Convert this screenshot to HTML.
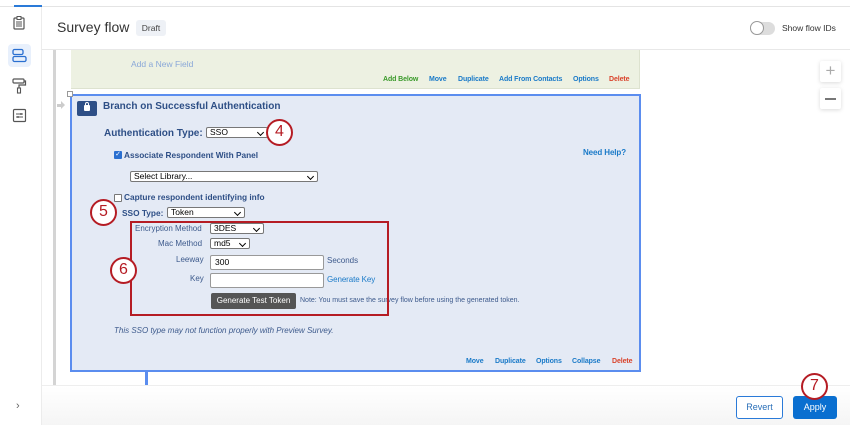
<!DOCTYPE html>
<html><head><meta charset="utf-8"><style>
*{box-sizing:border-box;margin:0;padding:0}
body{width:850px;height:425px;position:relative;overflow:hidden;background:#fff;font-family:"Liberation Sans",Arial,sans-serif;}
.a{position:absolute}
.lnk{color:#1a7ac8;font-size:7px;font-weight:bold;letter-spacing:-0.1px}
.lbl{color:#3d5a8c;font-size:8px}
.sel{position:absolute;background:#fff;border:1px solid #777;border-radius:2px;font-size:8.5px;color:#000;padding-left:3px;line-height:9px;height:11px}
.sel:after{content:"";position:absolute;right:4px;top:2px;width:4px;height:4px;border-right:1.5px solid #000;border-bottom:1.5px solid #000;transform:rotate(45deg)}
.inp{position:absolute;background:#fff;border:1px solid #999;border-radius:2px;font-size:8.5px;padding-left:4px;line-height:13px;height:15px}
.circ{position:absolute;width:27px;height:27px;border-radius:50%;border:2.5px solid #b51c24;background:#fff;color:#b51c24;font-size:16px;text-align:center;line-height:22px}
</style></head><body>
<div class="a" style="left:0;top:6px;width:850px;height:1px;background:#e4e4e4"></div>
<div class="a" style="left:14px;top:5px;width:28px;height:2px;background:#2a7ad8"></div>
<div class="a" style="left:41px;top:7px;width:1px;height:418px;background:#ececec"></div>
<svg class="a" style="left:11px;top:15px" width="16" height="16" viewBox="0 0 16 16"><rect x="3" y="3" width="10" height="11" rx="1" fill="none" stroke="#555" stroke-width="1.2"/><rect x="6" y="1.5" width="4" height="3" fill="#fff" stroke="#555"/><path d="M5 7h6M5 9h6M5 11h6" stroke="#555"/></svg>
<div class="a" style="left:8px;top:44px;width:23px;height:23px;border-radius:4px;background:#e8f0fc"></div>
<svg class="a" style="left:12px;top:48px" width="15" height="15" viewBox="0 0 15 15"><rect x="1" y="1.5" width="10" height="5" rx="1.5" fill="none" stroke="#2a6fd0" stroke-width="1.3"/><rect x="1" y="8.5" width="13" height="5" rx="1.5" fill="none" stroke="#2a6fd0" stroke-width="1.3"/></svg>
<svg class="a" style="left:12px;top:78px" width="15" height="16" viewBox="0 0 15 16"><rect x="1" y="1" width="11" height="4" rx="1" fill="none" stroke="#555" stroke-width="1.2"/><path d="M12 3h1.5v4H7v3" fill="none" stroke="#555" stroke-width="1.2"/><rect x="5.5" y="10" width="3" height="5" fill="none" stroke="#555" stroke-width="1.1"/></svg>
<svg class="a" style="left:12px;top:108px" width="15" height="15" viewBox="0 0 15 15"><rect x="1.5" y="1.5" width="12" height="12" rx="1" fill="none" stroke="#555" stroke-width="1.2"/><path d="M4 6h7M4 9h7" stroke="#555"/><circle cx="9" cy="6" r="1" fill="#555"/><circle cx="6" cy="9" r="1" fill="#555"/></svg>
<div class="a" style="left:16px;top:400px;color:#666;font-size:11px">›</div>
<div class="a" style="left:57px;top:19px;font-size:14px;color:#333">Survey flow</div>
<div class="a" style="left:136px;top:20px;width:30px;height:16px;background:#eef1f6;border-radius:3px;font-size:8.5px;color:#444;text-align:center;line-height:16px">Draft</div>
<div class="a" style="left:750px;top:22px;width:25px;height:13px;border-radius:7px;background:#ddd"></div>
<div class="a" style="left:750px;top:21px;width:14px;height:14px;border-radius:50%;background:#fff;border:1px solid #999"></div>
<div class="a" style="left:782px;top:23px;font-size:8.5px;color:#333">Show flow IDs</div>
<div class="a" style="left:42px;top:49px;width:808px;height:1px;background:#e8e8e8"></div>
<div class="a" style="left:820px;top:61px;width:21px;height:21px;background:#fff;box-shadow:0 1px 4px rgba(0,0,0,.15);border-radius:2px;color:#aaa;font-size:17px;text-align:center;line-height:20px">+</div>
<div class="a" style="left:820px;top:88px;width:21px;height:21px;background:#fff;box-shadow:0 1px 4px rgba(0,0,0,.15);border-radius:2px;"><div class="a" style="left:5px;top:10px;width:11px;height:1.5px;background:#777"></div></div>
<div class="a" style="left:53px;top:50px;width:3px;height:335px;background:#d4d4d4"></div>
<div class="a" style="left:71px;top:50px;width:569px;height:39px;background:#edf1e2;border-bottom:1px solid #dde2cf;border-right:1px solid #dde2cf"></div>
<div class="a" style="left:131px;top:59px;font-size:8.5px;color:#8aa8d8">Add a New Field</div>
<div class="a lnk" style="left:383px;top:76px;color:#3a9a2a">Add Below</div>
<div class="a lnk" style="left:429px;top:76px">Move</div>
<div class="a lnk" style="left:458px;top:76px">Duplicate</div>
<div class="a lnk" style="left:499px;top:76px">Add From Contacts</div>
<div class="a lnk" style="left:573px;top:76px">Options</div>
<div class="a lnk" style="left:609px;top:76px;color:#d9432b">Delete</div>
<div class="a" style="left:57px;top:104px;width:6px;height:3px;background:#ccc"></div>
<div class="a" style="left:61px;top:101px;width:0;height:0;border-left:4px solid #ccc;border-top:4px solid transparent;border-bottom:4px solid transparent"></div>
<div class="a" style="left:70px;top:94px;width:571px;height:278px;background:#e4eaf5;border:2px solid #5b8def"></div>
<div class="a" style="left:67px;top:91px;width:6px;height:6px;background:#fff;border:1px solid #999"></div>
<div class="a" style="left:77px;top:101px;width:20px;height:15px;background:#2e4f86;border-radius:2px"></div>
<div class="a" style="left:84px;top:105px;width:6px;height:6px;background:#fff;border-radius:1px"></div>
<div class="a" style="left:85px;top:102px;width:4px;height:5px;border:1.3px solid #fff;border-radius:2px 2px 0 0"></div>
<div class="a" style="left:103px;top:101px;font-size:10px;font-weight:bold;color:#2e4f86">Branch on Successful Authentication</div>
<div class="a" style="left:104px;top:128px;font-size:10px;font-weight:bold;color:#2e4f86">Authentication Type:</div>
<div class="sel" style="left:206px;top:127px;width:62px">SSO</div>
<div class="a" style="left:114px;top:151px;width:8px;height:8px;background:#2a6fd0;border-radius:1px;color:#fff;font-size:7px;line-height:8px;text-align:center">✓</div>
<div class="a" style="left:124px;top:150px;font-size:8.3px;font-weight:bold;color:#2e4f86">Associate Respondent With Panel</div>
<div class="a lnk" style="left:583px;top:148px;font-size:8px">Need Help?</div>
<div class="sel" style="left:130px;top:171px;width:188px">Select Library...</div>
<div class="a" style="left:114px;top:194px;width:8px;height:8px;background:#fff;border:1px solid #777;border-radius:1px"></div>
<div class="a" style="left:124px;top:192px;font-size:8.3px;font-weight:bold;color:#2e4f86">Capture respondent identifying info</div>
<div class="a" style="left:122px;top:208px;font-size:8.3px;font-weight:bold;color:#2e4f86">SSO Type:</div>
<div class="sel" style="left:167px;top:207px;width:78px">Token</div>
<div class="a lbl" style="left:135px;top:224px">Encryption Method</div>
<div class="sel" style="left:210px;top:223px;width:54px">3DES</div>
<div class="a lbl" style="left:158px;top:239px">Mac Method</div>
<div class="sel" style="left:210px;top:238px;width:40px">md5</div>
<div class="a lbl" style="left:176px;top:255px">Leeway</div>
<div class="inp" style="left:210px;top:255px;width:114px">300</div>
<div class="a lbl" style="left:327px;top:256px">Seconds</div>
<div class="a lbl" style="left:190px;top:274px">Key</div>
<div class="inp" style="left:210px;top:273px;width:114px"></div>
<div class="a lnk" style="left:327px;top:275px;font-size:8px;font-weight:normal">Generate Key</div>
<div class="a" style="left:211px;top:293px;width:85px;height:16px;background:#555;border-radius:2px;color:#fff;font-size:8px;line-height:16px;text-align:center">Generate Test Token</div>
<div class="a lbl" style="left:300px;top:297px;font-size:7px">Note: You must save the survey flow before using the generated token.</div>
<div class="a lbl" style="left:114px;top:326px;font-style:italic">This SSO type may not function properly with Preview Survey.</div>
<div class="a lnk" style="left:466px;top:358px">Move</div>
<div class="a lnk" style="left:495px;top:358px">Duplicate</div>
<div class="a lnk" style="left:536px;top:358px">Options</div>
<div class="a lnk" style="left:572px;top:358px">Collapse</div>
<div class="a lnk" style="left:612px;top:358px;color:#d9432b">Delete</div>
<div class="a" style="left:145px;top:372px;width:3px;height:13px;background:#5b8def"></div>
<div class="a" style="left:130px;top:221px;width:259px;height:95px;border:2.5px solid #b51c24"></div>
<div class="circ" style="left:266px;top:119px">4</div>
<div class="circ" style="left:90px;top:199px">5</div>
<div class="circ" style="left:110px;top:257px">6</div>
<div class="a" style="left:42px;top:385px;width:808px;height:40px;background:linear-gradient(#fff,#f5f5f5);border-top:1px solid #eee"></div>
<div class="a" style="left:736px;top:396px;width:47px;height:23px;border:1px solid #2a7ad8;border-radius:3px;background:#fff;color:#2a6fb8;font-size:9px;text-align:center;line-height:21px">Revert</div>
<div class="a" style="left:793px;top:396px;width:44px;height:23px;border-radius:3px;background:#0a6fd0;color:#fff;font-size:9px;text-align:center;line-height:23px">Apply</div>
<div class="circ" style="left:801px;top:373px">7</div>
</body></html>
